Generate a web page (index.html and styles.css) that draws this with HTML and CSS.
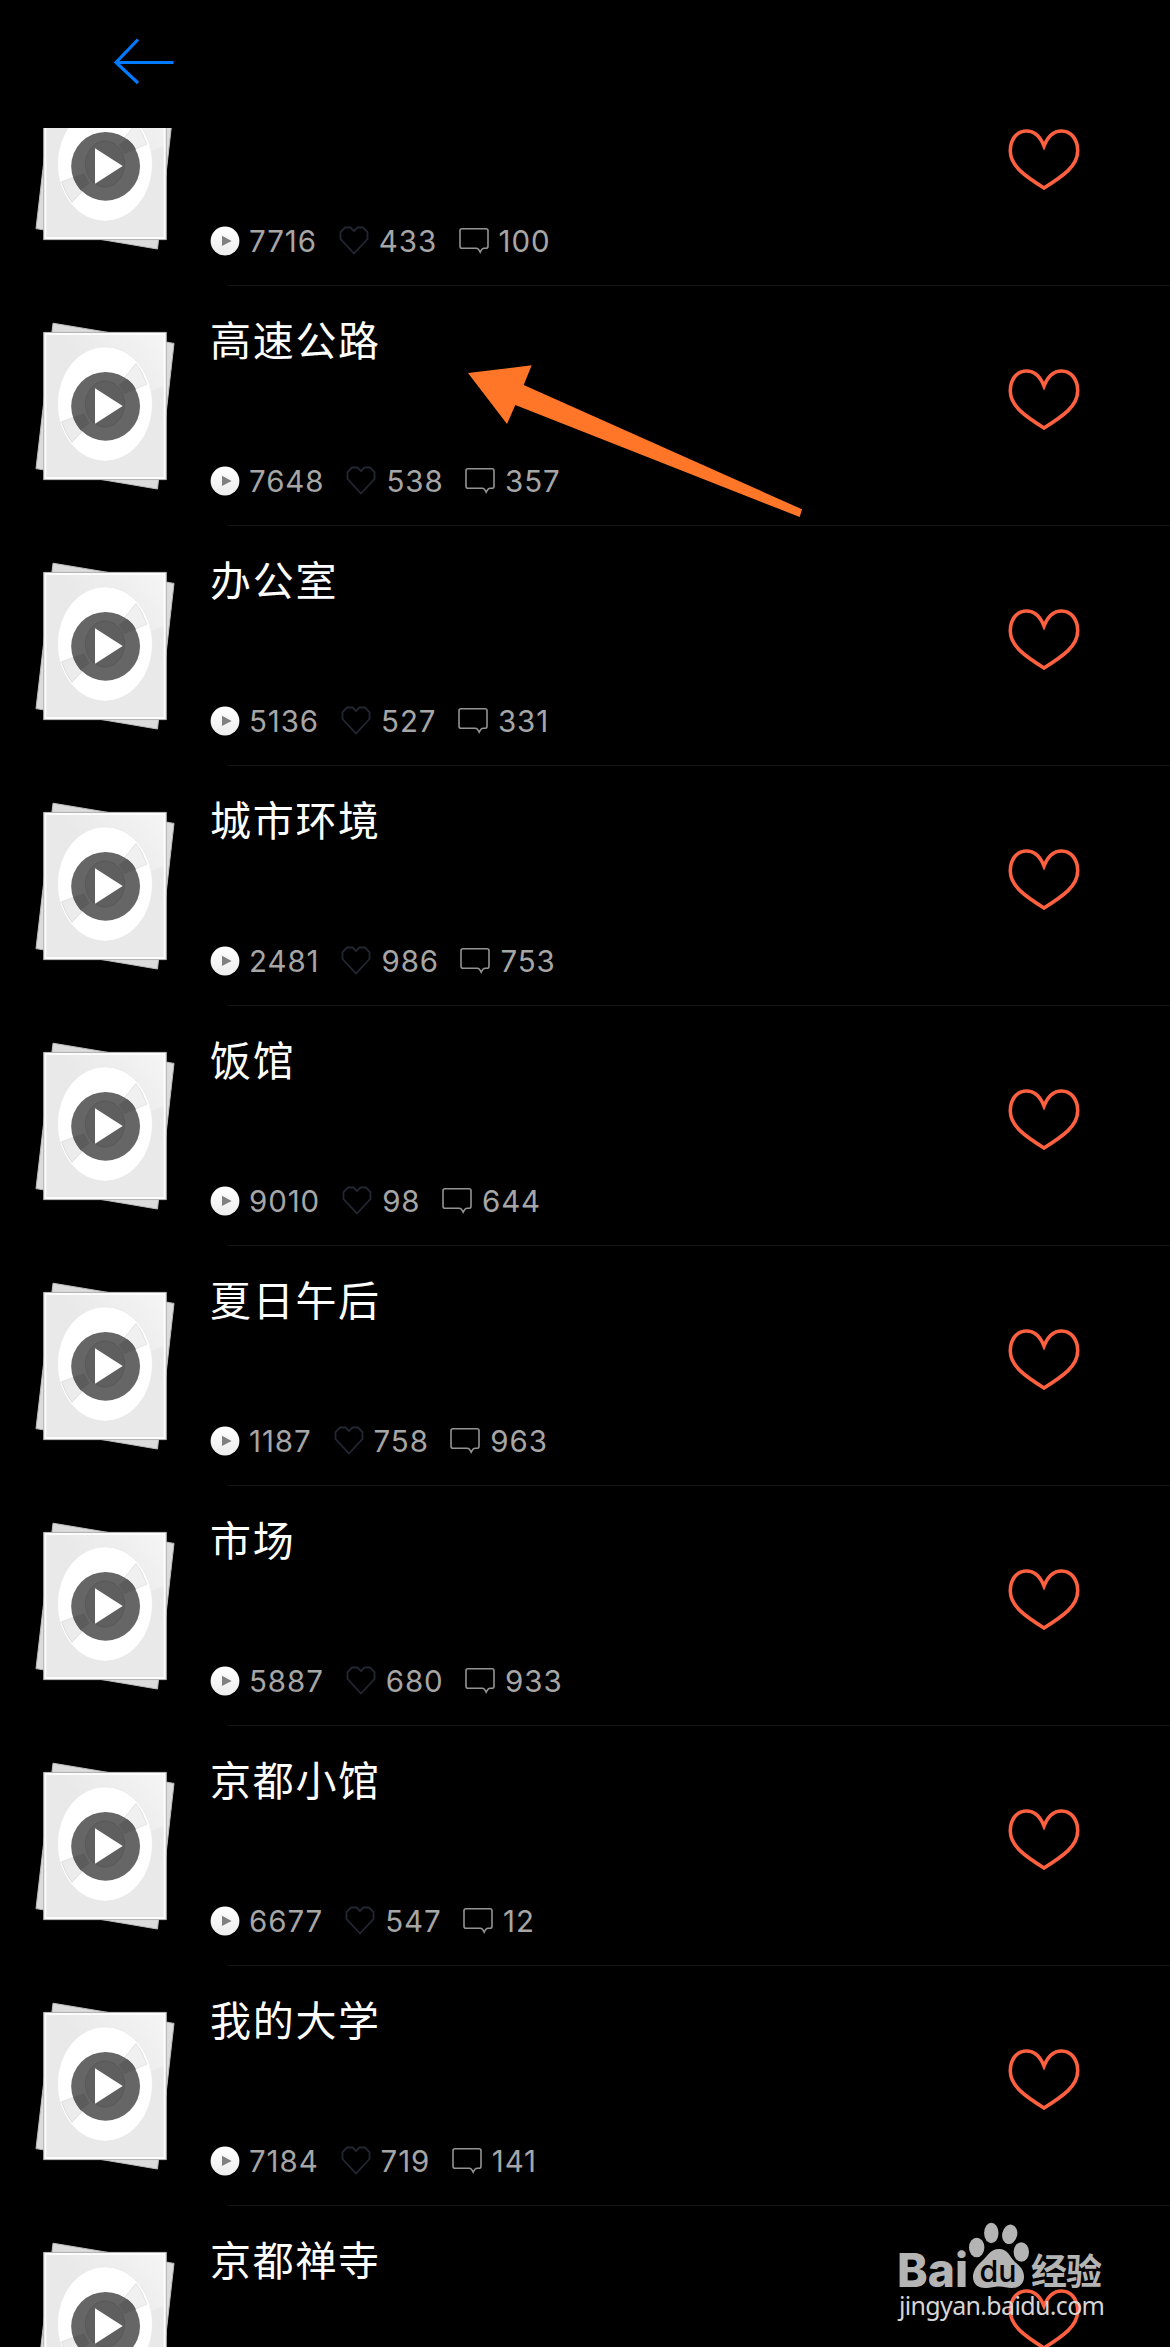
FILE: index.html
```
<!doctype html>
<html lang="zh">
<head>
    <meta charset="utf-8">
    <title>音效</title>
    <meta name="viewport" content="width=device-width, initial-scale=1.0">
    <link rel="stylesheet" href="styles.css">
</head>
<body>
    <svg class="sprite" xmlns="http://www.w3.org/2000/svg">
        <defs>
            <linearGradient id="sheen" x1="0" y1=".7" x2="1" y2="0">
                <stop offset=".4" stop-color="#e9e9e9"/>
                <stop offset="1" stop-color="#f5f5f5"/>
            </linearGradient>
            <linearGradient id="ball" x1="0" y1="0" x2="0" y2="1">
                <stop offset="0" stop-color="#ffffff"/>
                <stop offset="1" stop-color="#ececec"/>
            </linearGradient>
        </defs>
        <symbol id="cover" viewBox="0 0 144 172">
            <path d="M20 3.2 141 23.4 124.5 169 3 148.6Z" fill="#dcdcdc" stroke="#bdbdbd" stroke-width="1"/>
            <rect x="10.8" y="12.5" width="122.4" height="147" fill="#e9e9e9" stroke="#b4b4b4" stroke-width="1.2"/>
            <path d="M12 106 132 66V14H12Z" fill="url(#sheen)"/>
            <rect x="12.4" y="14" width="119.2" height="144" fill="none" stroke="#fff" stroke-width="1.8"/>
            <ellipse cx="72" cy="84" rx="47.5" ry="57.2" fill="#fff" stroke="#e2e2e2" stroke-width=".6"/>
            <path d="M103 43.3Q110 52 113.7 64.3L91 73.7 85.7 65Z" fill="#f0f0f0" stroke="#dedede" stroke-width=".8"/>
            <path d="M28.7 102Q32 113 39 122.3L56.3 103.3 51 93.3Z" fill="#ececec" stroke="#d8d8d8" stroke-width=".8"/>
            <circle cx="72.6" cy="86.3" r="34.4" fill="#666"/>
            <path d="M94 59 85.7 65 91 73.7 103 69.5Q100 63 94 59ZM40.5 97 51 93.3 56.3 103.3 48 110.5Q43 105 40.5 97Z" fill="#5c5c5c"/>
            <ellipse cx="72" cy="84" rx="19.5" ry="23" fill="#5f5f5f" stroke="#555" stroke-width=".8"/>
            <path d="M62 68.3 89.7 86 62 103.7Z" fill="#fff"/>
        </symbol>
        <symbol id="plays" viewBox="0 0 30 30">
            <circle cx="15" cy="15" r="14.4" fill="url(#ball)"/>
            <path d="M12 9.7 21.6 14.9 12 20Z" fill="#808080"/>
        </symbol>
        <symbol id="like" viewBox="0 0 30 30">
            <path d="M15 5 11.5 1.5H6L1.5 6V13L15 27.5 28.5 13V6L24 1.5H18.5Z" fill="none" stroke="#222733" stroke-width="1.8"/>
        </symbol>
        <symbol id="comment" viewBox="0 0 30 28">
            <path d="M3 1.8H27Q29 1.8 29 3.8V19.3Q29 21.3 27 21.3H25Q23 21.3 21.2 25.2 19.4 21.3 17.4 21.3H3Q1 21.3 1 19.3V3.8Q1 1.8 3 1.8Z" fill="none" stroke="#939393" stroke-width="1.6"/>
        </symbol>
        <symbol id="fav" viewBox="0 0 76 68">
            <path d="M38 20C34 10 28 5 20.5 5 11 5 4.3 13 4.3 25 4.3 40 19 50 38 62 57 50 71.7 40 71.7 25 71.7 13 65 5 55.5 5 48 5 42 10 38 20Z" fill="none" stroke="#ff6140" stroke-width="3.6"/>
        </symbol>
    </svg>

    <div class="header">
        <svg class="back" viewBox="0 0 60 48">
            <path d="M59.5 24.5H2M24 1.5 2 24.5 24 45" fill="none" stroke="#007aff" stroke-width="3.2"/>
        </svg>
    </div>

    <div class="list">
        <div class="row">
            <svg class="cover"><use href="#cover"/></svg>
            <div class="info">
                <div class="title"></div>
                <div class="stats">
                    <svg class="plays"><use href="#plays"/></svg><span>7716</span>
                    <svg class="like"><use href="#like"/></svg><span>433</span>
                    <svg class="comment"><use href="#comment"/></svg><span>100</span>
                </div>
            </div>
            <svg class="fav"><use href="#fav"/></svg>
        </div>
        <div class="row">
            <svg class="cover"><use href="#cover"/></svg>
            <div class="info">
                <div class="title">高速公路</div>
                <div class="stats">
                    <svg class="plays"><use href="#plays"/></svg><span>7648</span>
                    <svg class="like"><use href="#like"/></svg><span>538</span>
                    <svg class="comment"><use href="#comment"/></svg><span>357</span>
                </div>
            </div>
            <svg class="fav"><use href="#fav"/></svg>
        </div>
        <div class="row">
            <svg class="cover"><use href="#cover"/></svg>
            <div class="info">
                <div class="title">办公室</div>
                <div class="stats">
                    <svg class="plays"><use href="#plays"/></svg><span>5136</span>
                    <svg class="like"><use href="#like"/></svg><span>527</span>
                    <svg class="comment"><use href="#comment"/></svg><span>331</span>
                </div>
            </div>
            <svg class="fav"><use href="#fav"/></svg>
        </div>
        <div class="row">
            <svg class="cover"><use href="#cover"/></svg>
            <div class="info">
                <div class="title">城市环境</div>
                <div class="stats">
                    <svg class="plays"><use href="#plays"/></svg><span>2481</span>
                    <svg class="like"><use href="#like"/></svg><span>986</span>
                    <svg class="comment"><use href="#comment"/></svg><span>753</span>
                </div>
            </div>
            <svg class="fav"><use href="#fav"/></svg>
        </div>
        <div class="row">
            <svg class="cover"><use href="#cover"/></svg>
            <div class="info">
                <div class="title">饭馆</div>
                <div class="stats">
                    <svg class="plays"><use href="#plays"/></svg><span>9010</span>
                    <svg class="like"><use href="#like"/></svg><span>98</span>
                    <svg class="comment"><use href="#comment"/></svg><span>644</span>
                </div>
            </div>
            <svg class="fav"><use href="#fav"/></svg>
        </div>
        <div class="row">
            <svg class="cover"><use href="#cover"/></svg>
            <div class="info">
                <div class="title">夏日午后</div>
                <div class="stats">
                    <svg class="plays"><use href="#plays"/></svg><span>1187</span>
                    <svg class="like"><use href="#like"/></svg><span>758</span>
                    <svg class="comment"><use href="#comment"/></svg><span>963</span>
                </div>
            </div>
            <svg class="fav"><use href="#fav"/></svg>
        </div>
        <div class="row">
            <svg class="cover"><use href="#cover"/></svg>
            <div class="info">
                <div class="title">市场</div>
                <div class="stats">
                    <svg class="plays"><use href="#plays"/></svg><span>5887</span>
                    <svg class="like"><use href="#like"/></svg><span>680</span>
                    <svg class="comment"><use href="#comment"/></svg><span>933</span>
                </div>
            </div>
            <svg class="fav"><use href="#fav"/></svg>
        </div>
        <div class="row">
            <svg class="cover"><use href="#cover"/></svg>
            <div class="info">
                <div class="title">京都小馆</div>
                <div class="stats">
                    <svg class="plays"><use href="#plays"/></svg><span>6677</span>
                    <svg class="like"><use href="#like"/></svg><span>547</span>
                    <svg class="comment"><use href="#comment"/></svg><span>12</span>
                </div>
            </div>
            <svg class="fav"><use href="#fav"/></svg>
        </div>
        <div class="row">
            <svg class="cover"><use href="#cover"/></svg>
            <div class="info">
                <div class="title">我的大学</div>
                <div class="stats">
                    <svg class="plays"><use href="#plays"/></svg><span>7184</span>
                    <svg class="like"><use href="#like"/></svg><span>719</span>
                    <svg class="comment"><use href="#comment"/></svg><span>141</span>
                </div>
            </div>
            <svg class="fav"><use href="#fav"/></svg>
        </div>
        <div class="row">
            <svg class="cover"><use href="#cover"/></svg>
            <div class="info">
                <div class="title">京都禅寺</div>
            </div>
            <svg class="fav"><use href="#fav"/></svg>
        </div>
    </div>

    <svg class="pointer" viewBox="0 0 336 154">
        <path d="M1 9 64.7 1.3 56.7 21 335 145.3 332.7 153 48.3 41 40 60Z" fill="#ff7628"/>
    </svg>

    <svg class="watermark" viewBox="0 0 220 110">
        <g fill="#b4b4b4">
            <text class="wm-bai" x="7" y="66.5" textLength="71" lengthAdjust="spacingAndGlyphs">Bai</text>
            <ellipse cx="86.7" cy="27.5" rx="7.7" ry="9.8"/>
            <ellipse cx="101.3" cy="13" rx="7.2" ry="10.2"/>
            <ellipse cx="119.7" cy="14.3" rx="7.5" ry="9.8" transform="rotate(12 119.7 14.3)"/>
            <ellipse cx="131.3" cy="32" rx="7.7" ry="9.8"/>
            <path d="M109 29C100 29 98 36 91 42 84 48 83 54 83 57 83 64 88 68 95 68 101 68 104 66.5 109 66.5S117 68 122 68C130 68 134 63 134 57 134 50 130 46 125 42 119 36 118 29 109 29Z"/>
            <text class="wm-cn" x="141" y="65" textLength="71">经验</text>
        </g>
        <text class="wm-du" x="89.5" y="62" textLength="37" lengthAdjust="spacingAndGlyphs">du</text>
        <text class="wm-url" x="9" y="94.5" textLength="206">jingyan.baidu.com</text>
    </svg>
</body>
</html>
```

FILE: styles.css
```
html, body {
    margin: 0;
    height: 2347px;
    overflow: hidden;
    background-color: #000;
}

body {
    position: relative;
    font-family: Inter, "Noto Sans CJK SC", sans-serif;
    color: #fff;
}

.sprite {
    position: absolute;
    width: 0;
    height: 0;
}

.header {
    box-sizing: border-box;
    height: 128px;
    padding: 38px 0 0 114px;
}

.back {
    display: block;
    width: 60px;
    height: 48px;
}

.list {
    height: 2219px;
    overflow: hidden;
}

.row {
    display: flex;
    box-sizing: border-box;
    height: 240px;
    padding-left: 33px;
    background: linear-gradient(#141414, #141414) 228px 100% / 100% 1px no-repeat;
}

    .row:first-child {
        margin-top: -82px;
    }

.cover {
    width: 144px;
    height: 172px;
    margin-top: 34px;
}

.info {
    flex: 1;
    display: flex;
    flex-direction: column;
    padding-left: 33px;
}

.title {
    height: 60px;
    margin-top: 22px;
    line-height: 60px;
    font-family: "Noto Sans CJK SC", sans-serif;
    font-size: 41px;
    font-weight: 400;
    letter-spacing: 1.7px;
}

.stats {
    display: flex;
    align-items: center;
    height: 30px;
    margin-top: 98px;
    font-size: 29.5px;
    font-weight: 400;
    line-height: 30px;
    color: #a6a6a6;
}

    .stats span {
        letter-spacing: .9px;
    }

.plays {
    width: 30px;
    height: 30px;
    margin-right: 9px;
}

.like {
    width: 30px;
    height: 30px;
    margin: 0 10px 0 22px;
}

.comment {
    width: 30px;
    height: 28px;
    margin: 0 10px 0 21.5px;
}

.fav {
    width: 76px;
    height: 68px;
    margin: 80px 88px 0 0;
}

.pointer {
    position: absolute;
    left: 467px;
    top: 364px;
    width: 336px;
    height: 154px;
}

.watermark {
    position: absolute;
    left: 890px;
    top: 2220px;
    width: 220px;
    height: 110px;
}

.wm-bai {
    font-size: 47px;
    font-weight: 800;
}

.wm-du {
    font-size: 30px;
    font-weight: 500;
    fill: #000;
}

.wm-cn {
    font-family: "Noto Sans CJK SC", sans-serif;
    font-size: 36px;
    font-weight: 700;
}

.wm-url {
    font-family: "Noto Sans", sans-serif;
    font-size: 25px;
    fill: #d6d6d6;
}
```
